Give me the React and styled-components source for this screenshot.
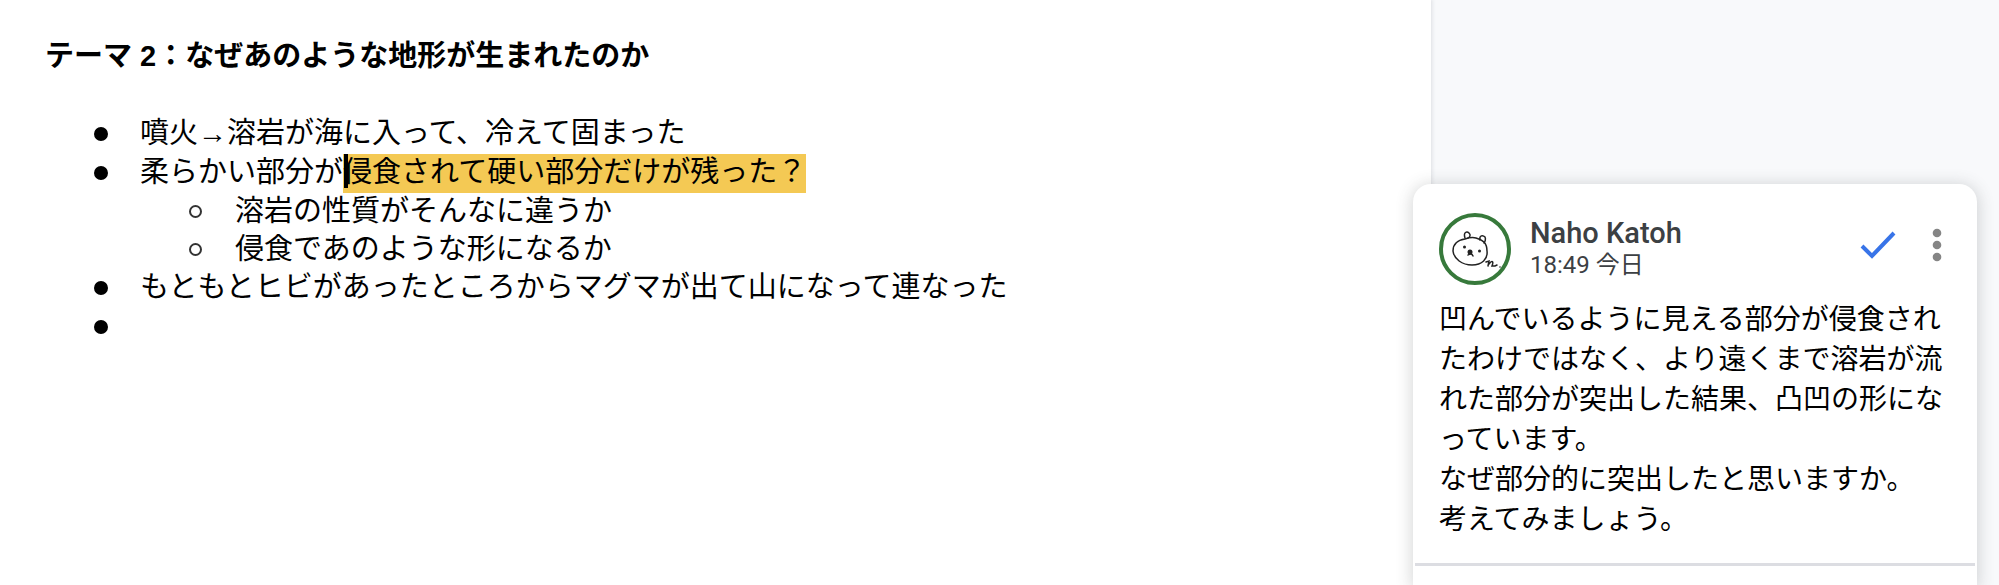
import React from "react";
import styled, { createGlobalStyle } from "styled-components";

const GlobalStyle = createGlobalStyle`
  *, *::before, *::after { box-sizing: border-box; }
  body { margin: 0; background: #f8f9fb; }
`;

const Workspace = styled.div`
  display: flex;
  min-height: 100vh;
  overflow: hidden;
`;

const Paper = styled.main`
  flex: 1;
  min-width: 0;
  padding: 38px 45px;
  background: #fff;
  box-shadow: 0 0 4px 1px #dcdee2;
  color: #000;
  font-family: "Liberation Sans", "Noto Sans CJK JP", sans-serif;
  font-size: 29px;
  line-height: 36px;
`;

const Title = styled.h1`
  margin: 0 0 41px;
  font-size: 29px;
  font-weight: 700;
`;

const List = styled.ul`
  margin: 0;
  padding: 0 0 0 49px;
  list-style: none;
`;

const Item = styled.li`
  display: grid;
  grid-template-columns: 13px 1fr;
  column-gap: 33px;

  &::before {
    content: "";
    width: 13px;
    height: 13px;
    margin-top: 12px;
    border: ${(p) => (p.$hollow ? "2px solid #333" : "7px solid #000")};
    border-radius: 50%;
  }
`;

const Line = styled.p`
  margin: 0;
  min-height: ${(p) => (p.$nested ? "38px" : "39px")};
`;

const SubList = styled(List)`
  grid-column: 2;
`;

const Highlight = styled.mark`
  position: relative;
  padding: 2px 0 5px;
  background: #f4c954;
  color: inherit;
`;

const Caret = styled.span`
  position: absolute;
  top: 0;
  left: 1px;
  width: 4px;
  height: 34px;
  background: #000;
`;

const Sidebar = styled.aside`
  position: relative;
  display: flex;
  flex: 0 0 568px;
  padding: 184px 22px 0 0;
`;

const Card = styled.article`
  flex: 1;
  margin-left: -18px;
  padding: 29px 2px 0;
  border-radius: 18px 18px 0 0;
  background: #fff;
  box-shadow: 0 2px 16px 2px rgba(60, 64, 67, 0.2);
  font-family: Roboto, "Noto Sans CJK JP", sans-serif;
`;

const CardHeader = styled.header`
  display: flex;
  align-items: flex-start;
  padding: 0 21px 0 24px;
`;

const Avatar = styled.svg`
  flex: none;
  width: 72px;
  height: 72px;
`;

const Byline = styled.div`
  flex: 1;
  margin: 4px 0 0 19px;
  color: #3c4043;
`;

const Author = styled.h2`
  margin: 0;
  font-size: 29px;
  font-weight: 500;
  line-height: 32px;
`;

const Time = styled.time`
  display: block;
  font-size: 24px;
  line-height: 32px;
`;

const Actions = styled.div`
  display: flex;
  gap: 10px;
`;

const IconButton = styled.button`
  display: flex;
  align-items: center;
  justify-content: center;
  width: ${(p) => p.$width};
  height: 64px;
  padding: 0;
  border: 0;
  background: none;
  cursor: pointer;
`;

const Body = styled.div`
  padding: 15px 22px 23px 24px;
  border-bottom: 3px solid #dcdde2;
  color: #000;
  font-size: 28px;
  line-height: 40px;
  line-break: loose;

  p { margin: 0; }
`;

function BearAvatar() {
  return (
    <Avatar viewBox="0 0 72 72" role="img" aria-label="Naho Katoh">
      <circle cx="36" cy="36" r="34" fill="#fff" stroke="#37793b" strokeWidth="4" />
      <g fill="none" stroke="#222" strokeWidth="1.5" strokeLinecap="round">
        <path d="M26 26C18 27 14 32 14 38C15 46 23 52 33 52C43 52 49 46 48 38C48 30 44 27 37 25C33 24 29 25 26 26" />
        <path d="M26 25C24 19 28 18 30 20C32 22 31 24 29 25" />
        <path d="M41 27C40 22 44 22 46 24C47 26 46 29 45 30" />
        <path d="M29 42C32 40 33 41 34 43" />
        <path d="M47 49L50 48L49 53M50 51C53 47 55 48 53 53L56 53L58 52" />
      </g>
      <g fill="#222">
        <ellipse cx="31" cy="39" rx="2.500" ry="2.500" />
        <circle cx="25.500" cy="34" r="1.500" />
        <circle cx="40.500" cy="38" r="1.500" />
        <circle cx="61" cy="54" r="0.800" />
      </g>
    </Avatar>
  );
}

export default function App() {
  return (
    <>
      <GlobalStyle />
      <Workspace lang="ja">
        <Paper>
          <Title>テーマ 2：なぜあのような地形が生まれたのか</Title>
          <List>
            <Item><Line>噴火→溶岩が海に入って、冷えて固まった</Line></Item>
            <Item>
              <Line>
                柔らかい部分が<Highlight><Caret />侵食されて硬い部分だけが残った？</Highlight>
              </Line>
              <SubList>
                <Item $hollow><Line $nested>溶岩の性質がそんなに違うか</Line></Item>
                <Item $hollow><Line $nested>侵食であのような形になるか</Line></Item>
              </SubList>
            </Item>
            <Item><Line>もともとヒビがあったところからマグマが出て山になって連なった</Line></Item>
            <Item><Line /></Item>
          </List>
        </Paper>
        <Sidebar>
          <Card>
            <CardHeader>
              <BearAvatar />
              <Byline>
                <Author>Naho Katoh</Author>
                <Time>18:49 今日</Time>
              </Byline>
              <Actions>
                <IconButton type="button" $width="64px" aria-label="解決">
                  <svg width="36" height="28" viewBox="0 0 36 28">
                    <path d="M2 15L12 25L34 2" fill="none" stroke="#3874e8" strokeWidth="4" />
                  </svg>
                </IconButton>
                <IconButton type="button" $width="34px" aria-label="その他の操作">
                  <svg width="10" height="34" viewBox="0 0 10 34" fill="#858585">
                    <circle cx="5" cy="5" r="4.300" />
                    <circle cx="5" cy="17" r="4.300" />
                    <circle cx="5" cy="29" r="4.300" />
                  </svg>
                </IconButton>
              </Actions>
            </CardHeader>
            <Body>
              <p>凹んでいるように見える部分が侵食されたわけではなく、より遠くまで溶岩が流れた部分が突出した結果、凸凹の形になっています。</p>
              <p>なぜ部分的に突出したと思いますか。</p>
              <p>考えてみましょう。</p>
            </Body>
          </Card>
        </Sidebar>
      </Workspace>
    </>
  );
}
